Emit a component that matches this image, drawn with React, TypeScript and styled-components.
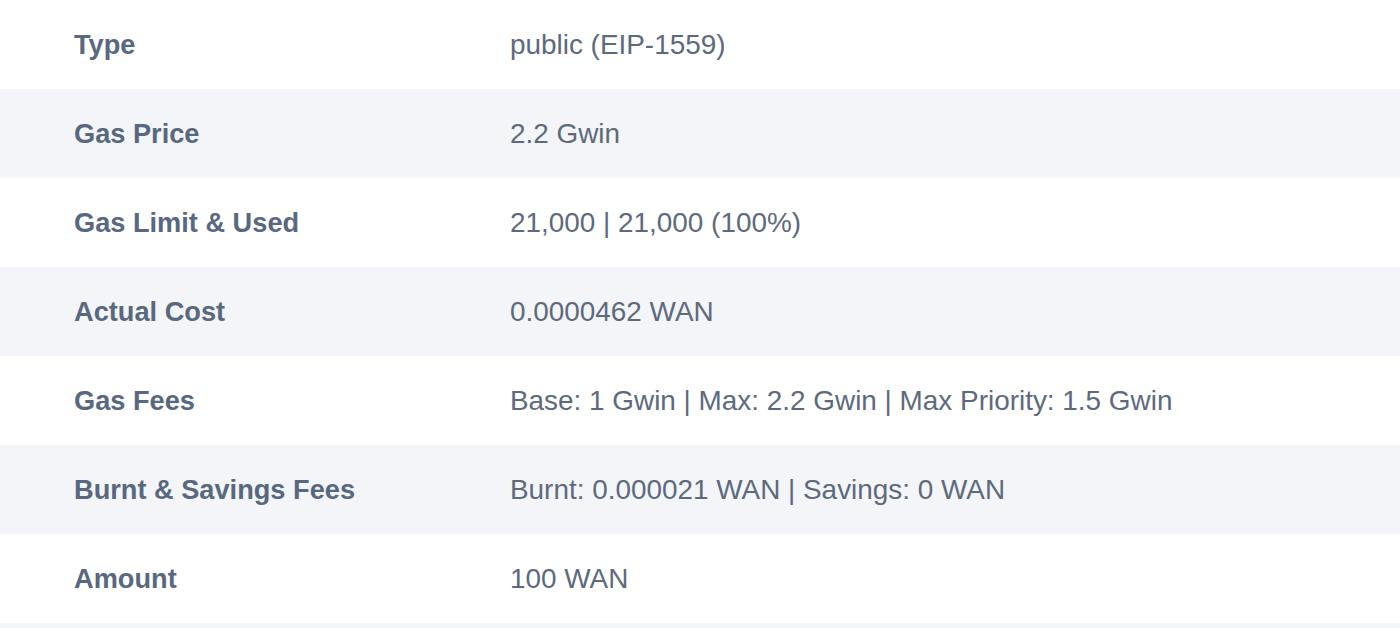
import React from 'react';
import styled, { createGlobalStyle } from 'styled-components';

const GlobalStyle = createGlobalStyle`
  html, body {
    margin: 0;
    padding: 0;
    background: #fff;
  }
  body {
    font-family: 'Liberation Sans', Arial, Helvetica, sans-serif;
    -webkit-font-smoothing: antialiased;
  }
`;

const rows: [string, string][] = [
  ['Type', 'public (EIP-1559)'],
  ['Gas Price', '2.2 Gwin'],
  ['Gas Limit & Used', '21,000 | 21,000 (100%)'],
  ['Actual Cost', '0.0000462 WAN'],
  ['Gas Fees', 'Base: 1 Gwin | Max: 2.2 Gwin | Max Priority: 1.5 Gwin'],
  ['Burnt & Savings Fees', 'Burnt: 0.000021 WAN | Savings: 0 WAN'],
  ['Amount', '100 WAN'],
  ['', ''],
];

export default function App() {
  return (
    <>
      <GlobalStyle />
      <Table>
        {rows.map(([label, value], i) => (
          <Row key={i} $striped={i % 2 === 1}>
            <Label>{label}</Label>
            <Value>{value}</Value>
          </Row>
        ))}
      </Table>
    </>
  );
}

const Table = styled.div`
  display: flex;
  flex-direction: column;
`;

const Row = styled.div<{ $striped: boolean }>`
  display: grid;
  grid-template-columns: 436px 1fr;
  align-items: center;
  height: 89px;
  padding-left: 74px;
  background: ${p => (p.$striped ? '#f4f5f8' : '#fff')};
`;

const Label = styled.div`
  font-size: 27.2px;
  font-weight: 700;
  color: #586880;
  white-space: nowrap;
`;

const Value = styled.div`
  font-size: 27.9px;
  color: #5d6a7d;
  white-space: nowrap;
`;
